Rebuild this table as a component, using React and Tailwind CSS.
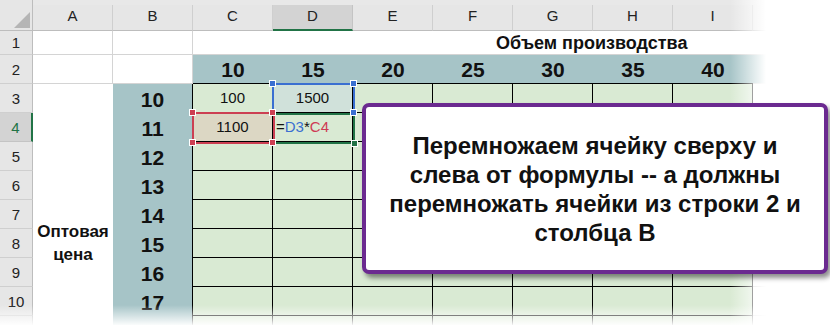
import React from 'react';

const COLS = ['A', 'B', 'C', 'D', 'E', 'F', 'G', 'H', 'I', 'J'];
const TOP_NUMS = ['10', '15', '20', '25', '30', '35', '40', ''];
const LEFT_NUMS = ['10', '11', '12', '13', '14', '15', '16', '17', ''];

function Handle({ className }) {
    return <div className={`absolute w-[7px] h-[7px] border border-white ${className}`} />;
}

function ColHeader({ label, selected }) {
    return (
        <div
            className={
                selected
                    ? 'flex items-end justify-center pb-[2px] bg-[#d3d3d3] border-r border-[#c4c4c4] border-b-2 border-b-[#217346] text-[15px] text-[#222]'
                    : 'flex items-end justify-center pb-[3px] bg-[#e6e6e6] border-r border-[#cfcfcf] border-b border-b-[#bdbdbd] text-[15px] text-[#222]'
            }
        >
            {label}
        </div>
    );
}

function RowHeader({ n, selected }) {
    return (
        <div
            className={
                selected
                    ? 'flex items-center justify-center pt-[2px] bg-[#d3d3d3] border-r-2 border-r-[#217346] border-b border-[#c4c4c4] text-[15px] text-[#217346]'
                    : 'flex items-center justify-center pt-[2px] bg-[#e6e6e6] border-r border-r-[#bdbdbd] border-b border-[#cfcfcf] text-[15px] text-[#222]'
            }
        >
            {n}
        </div>
    );
}

function DataCell({ row, col }) {
    // C3:I11 light green table
    if (row === 3 && col === 2) {
        return <div className="flex items-center justify-center bg-[#d9ead3] border-r border-b border-black text-[15px] text-[#111]">100</div>;
    }
    if (row === 3 && col === 3) {
        return <div className="flex items-center justify-center bg-[#d0e1da] border-r border-b border-black text-[15px] text-[#111]">1500</div>;
    }
    if (row === 4 && col === 2) {
        return <div className="flex items-center justify-center bg-[#dcd7c4] border-r border-b border-black text-[15px] text-[#111]">1100</div>;
    }
    if (row === 4 && col === 3) {
        return (
            <div className="flex items-center pl-[3px] bg-[#d9ead3] border-r border-b border-black text-[15px] text-[#111]">
                =<span className="text-[#3a6fd1]">D3</span>*<span className="text-[#cf3b54]">C4</span>
            </div>
        );
    }
    if (col >= 2 && col <= 8) {
        return <div className="bg-[#d9ead3] border-r border-b border-black" />;
    }
    return <div className="bg-white border-r border-b border-[#d4d4d4]" />;
}

export default function App() {
    const rows = [];
    for (let r = 3; r <= 11; r++) {
        rows.push(
            <React.Fragment key={r}>
                <RowHeader n={r < 11 ? r : ''} selected={r === 4} />
                {r === 3 && (
                    <div className="row-span-9 flex flex-col items-center pt-[136px] bg-white text-[17px] leading-[23px] font-bold text-[#111]">
                        <span>Оптовая</span>
                        <span>цена</span>
                    </div>
                )}
                <div className="flex items-center justify-center pt-[3px] bg-[#a6c4c7] border-r border-black text-[21px] font-bold text-[#111]">
                    {LEFT_NUMS[r - 3]}
                </div>
                {COLS.slice(2).map((c, i) => (
                    <DataCell key={c} row={r} col={i + 2} />
                ))}
            </React.Fragment>
        );
    }

    return (
        <div className="relative w-[830px] h-[325px] overflow-hidden bg-white font-['Liberation_Sans',Arial,sans-serif]">
            {/* sheet */}
            <div className="grid grid-cols-[33px_repeat(10,80px)] grid-rows-[31px_24px_repeat(10,29px)] w-[833px]">
                {/* column headers */}
                <div className="relative bg-[#e6e6e6] border-r border-r-[#bdbdbd] border-b border-b-[#bdbdbd]">
                    <svg className="absolute left-[14px] top-[12px]" width="16" height="16" viewBox="0 0 16 16">
                        <polygon points="16,0 16,16 0,16" fill="#b5b5b5" />
                    </svg>
                </div>
                {COLS.map(c => (
                    <div key={c} className="flex flex-col">
                        <div className="h-[9px] bg-[#e8e8e8]" />
                        <div className="flex-1 grid">
                            <ColHeader label={c} selected={c === 'D'} />
                        </div>
                    </div>
                ))}

                {/* row 1 */}
                <RowHeader n={1} />
                <div className="bg-white border-r border-b border-[#d4d4d4]" />
                <div className="bg-white border-r border-b border-[#d4d4d4]" />
                <div className="col-span-8 flex items-center pl-[303px] pt-[2px] bg-white border-b border-[#d4d4d4] text-[18px] font-bold text-[#111]">
                    Объем производства
                </div>

                {/* row 2 */}
                <RowHeader n={2} />
                <div className="bg-white border-r border-b border-[#d4d4d4]" />
                <div className="bg-white border-r border-b border-[#d4d4d4]" />
                {TOP_NUMS.map((n, i) => (
                    <div
                        key={i}
                        className={
                            i < 7
                                ? 'flex items-center justify-center pt-[2px] bg-[#a6c4c7] border-b border-black text-[21px] font-bold text-[#111]'
                                : 'bg-[#a6c4c7] border-b border-[#d4d4d4]'
                        }
                    >
                        {n}
                    </div>
                ))}

                {rows}
            </div>

            {/* range highlights from the formula being edited */}
            <div className="absolute left-[272px] top-[83px] w-[83px] h-[32px] border-2 border-[#3a6fd1]" />
            <div className="absolute left-[192px] top-[112px] w-[83px] h-[32px] border-2 border-[#cc3f52]" />
            <div className="absolute left-[273px] top-[113px] w-[82px] h-[31px] border-y-2 border-r-2 border-[#217346]" />
            <Handle className="left-[269px] top-[80px] bg-[#3a6fd1]" />
            <Handle className="left-[350px] top-[80px] bg-[#3a6fd1]" />
            <Handle className="left-[189px] top-[109px] bg-[#cc3f52]" />
            <Handle className="left-[189px] top-[139px] bg-[#cc3f52]" />
            <Handle className="left-[269px] top-[139px] bg-[#cc3f52]" />
            <Handle className="left-[269px] top-[109px] bg-[#cc3f52]" />
            <Handle className="left-[350px] top-[109px] bg-[#3a6fd1]" />
            <Handle className="left-[351px] top-[140px] w-[5px] h-[5px] bg-[#217346]" />

            {/* faded edges */}
            <div className="absolute left-[730px] top-0 h-[325px] w-[100px] flex">
                <div className="w-[36px] bg-linear-to-r from-white/0 to-white" />
                <div className="flex-1 bg-white" />
            </div>
            <div className="absolute left-0 bottom-0 w-[830px] h-[20px] bg-linear-to-b from-white/0 to-white/95" />

            {/* callout */}
            <div className="absolute left-[362px] top-[103px] w-[466px] h-[171px] flex items-center justify-center bg-white border-4 border-[#6b2a90] rounded-[7px] shadow-[3px_4px_5px_rgba(0,0,0,0.45)]">
                <p className="text-center text-[24px] leading-[29px] font-bold text-[#111]">
                    Перемножаем ячейку сверху и<br />
                    слева от формулы -- а должны<br />
                    перемножать ячейки из строки 2 и<br />
                    столбца В
                </p>
            </div>
        </div>
    );
}
